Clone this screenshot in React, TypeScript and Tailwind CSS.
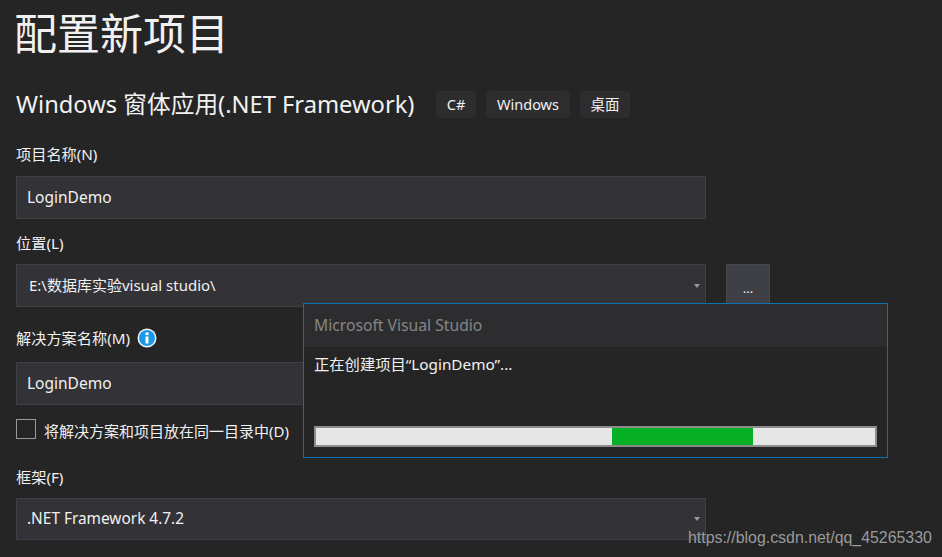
import React from "react";

const fieldClass =
  "flex items-center justify-between w-[690px] border border-[#3f3f46] bg-[#333337] text-[#f1f1f1]";

function Caret() {
  return <span className="w-0 h-0 border-x-[3.5px] border-x-transparent border-t-[4px] border-t-[#999999]" />;
}

function Chip({ label, width }: { label: string; width: string }) {
  return (
    <span className={`flex items-center justify-center h-[27px] rounded-[4px] bg-[#2d2d30] text-[14.5px] text-[#f1f1f1] ${width}`}>
      {label}
    </span>
  );
}

export default function App() {
  return (
    <div className="relative w-[942px] h-[557px] overflow-hidden bg-[#252526] pl-4 text-[#f1f1f1] font-['Noto_Sans','Noto_Sans_CJK_SC',sans-serif]">
      {/* Header */}
      <h1 className="h-[68px] -ml-[2px] text-[43px] leading-[68px] text-[#f1f1f1]">配置新项目</h1>

      <div className="flex items-center mt-[23px] h-[27px]">
        <h2 className="text-[23.7px] leading-[27px] w-[420px] whitespace-nowrap">Windows 窗体应用(.NET Framework)</h2>
        <div className="flex gap-[10px]">
          <Chip label="C#" width="w-[40px]" />
          <Chip label="Windows" width="w-[84px]" />
          <Chip label="桌面" width="w-[50px]" />
        </div>
      </div>

      {/* Form */}
      <label className="block mt-[26px] h-[21px] text-[15.2px] leading-[21px]">项目名称(N)</label>
      <div className={`${fieldClass} h-[43px] mt-[11px] px-[10px] text-[15.5px]`}>LoginDemo</div>

      <label className="block mt-[14px] h-[21px] text-[15.2px] leading-[21px]">位置(L)</label>
      <div className="flex gap-5 mt-[10px]">
        <div className={`${fieldClass} h-[43px] pl-[12px] pr-[5px] text-[15px]`}>
          <span>E:\数据库实验visual studio\</span>
          <Caret />
        </div>
        <button className="flex items-end justify-center w-[44px] h-[50px] border border-[#46464d] bg-[#3f3f46] pb-[18px] text-[13px] leading-none">
          ...
        </button>
      </div>

      <div className="flex items-center gap-[7px] mt-[12px] h-[24px] text-[15.2px]">
        <label>解决方案名称(M)</label>
        <svg width="20" height="20" viewBox="0 0 20 20">
          <circle cx="10" cy="10" r="9.5" fill="#f4f8fb" />
          <circle cx="10" cy="10" r="8" fill="#1c97ea" />
          <rect x="8.5" y="8.5" width="3" height="7" fill="#ffffff" />
          <rect x="8.5" y="4.5" width="3" height="2.6" fill="#ffffff" />
        </svg>
      </div>
      <div className={`${fieldClass} h-[43px] mt-[12px] px-[10px] text-[15.5px]`}>LoginDemo</div>

      <div className="flex items-center gap-2 mt-[14px] h-5">
        <span className="w-5 h-5 border border-[#999999] bg-[#252526]" />
        <span className="mt-[3px] text-[15px] leading-5 text-[#f1f1f1]">将解决方案和项目放在同一目录中(D)</span>
      </div>

      <label className="block mt-[28px] h-[21px] text-[15.2px] leading-[21px]">框架(F)</label>
      <div className={`${fieldClass} h-[42px] mt-[10px] pl-[10px] pr-[5px] text-[15.4px]`}>
        <span>.NET Framework 4.7.2</span>
        <Caret />
      </div>

      {/* Progress dialog */}
      <div className="absolute left-[303px] top-[303px] w-[585px] h-[155px] border border-[#0e70b0] bg-[#252526]">
        <div className="flex items-center h-[43px] px-[10px] bg-[#2d2d30] text-[15.7px] text-[#858585]">
          Microsoft Visual Studio
        </div>
        <div className="px-[10px] pt-[7px] h-[79px] text-[15.3px] leading-[21px] text-[#f1f1f1]">
          正在创建项目“LoginDemo”...
        </div>
        <div className="flex mx-[10px] h-[21px] border-2 border-[#8c8c8c] bg-[#e6e6e6]">
          <div className="ml-[296px] w-[141px] bg-[#06b025]" />
        </div>
      </div>

      {/* Watermark */}
      <span className="absolute left-[688px] top-[528px] text-[15.9px] leading-[20px] text-[#9a9a9a] font-['Liberation_Sans',sans-serif]">
        https://blog.csdn.net/qq_45265330
      </span>
    </div>
  );
}
